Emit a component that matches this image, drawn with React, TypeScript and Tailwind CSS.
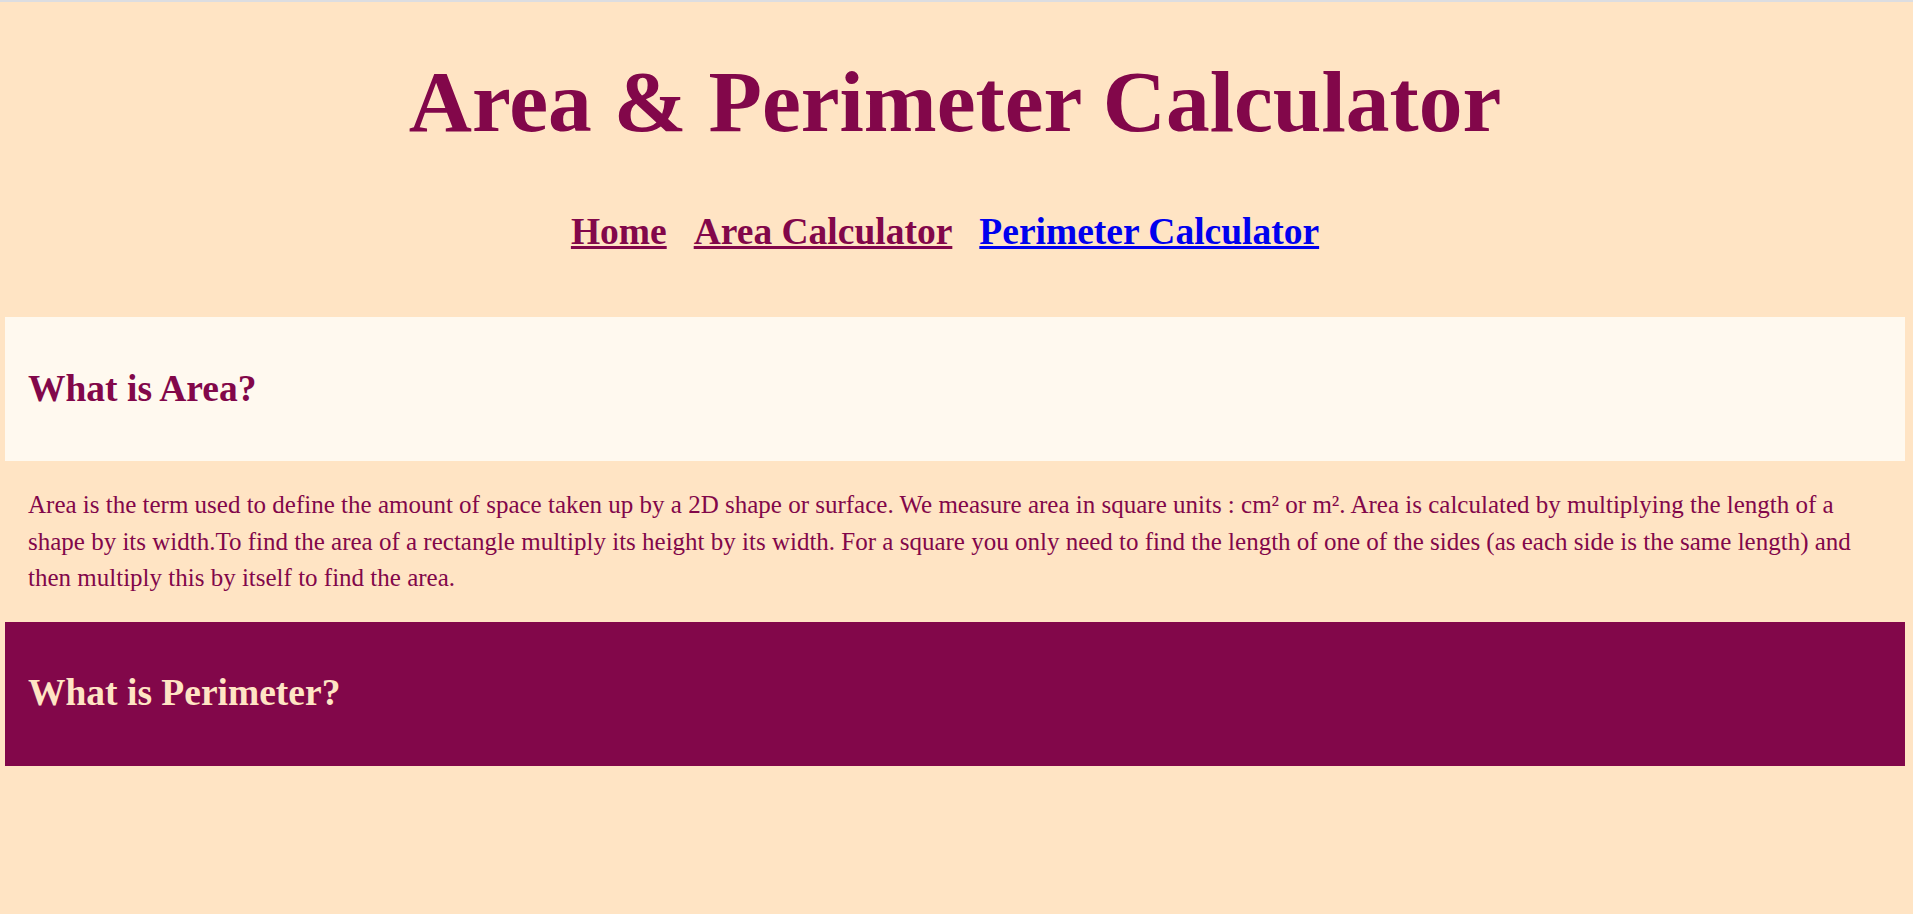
const serif = { fontFamily: '"Liberation Serif", "Times New Roman", serif' }

const links = [
  { label: 'Home', visited: true },
  { label: 'Area Calculator', visited: true },
  { label: 'Perimeter Calculator', visited: false },
]

export default function App() {
  return (
    <div
      style={serif}
      className="min-h-screen bg-[#ffe4c4] border-t-2 border-[#dcdde1] pl-[5px] pr-[8px]"
    >
      <h1 className="mt-[56px] text-center text-[87.5px] leading-none font-bold text-[#82074a]">
        Area &amp; Perimeter Calculator
      </h1>

      <nav className="mt-[67px] flex justify-center gap-[27px] pr-[20px]">
        {links.map((link) => (
          <a
            key={link.label}
            href="#"
            className={
              link.visited
                ? 'text-[37.5px] leading-none font-bold underline text-[#82074a]'
                : 'text-[37.5px] leading-none font-bold underline text-[#0000ee]'
            }
          >
            {link.label}
          </a>
        ))}
      </nav>

      <section className="mt-[67px]">
        <div className="h-[144px] flex items-center bg-[#fff9ef] pl-[23px]">
          <h2 className="text-[37.5px] font-bold text-[#82074a]">What is Area?</h2>
        </div>
        <p className="px-[23px] pt-[26px] pb-[25px] text-[25px] leading-[36.5px] text-[#82074a]">
          Area is the term used to define the amount of space taken up by a 2D shape or surface. We
          measure area in square units : cm² or m². Area is calculated by multiplying the length of a
          shape by its width.To find the area of a rectangle multiply its height by its width. For a
          square you only need to find the length of one of the sides (as each side is the same
          length) and then multiply this by itself to find the area.
        </p>
        <div className="h-[144px] flex items-center bg-[#82074a] pl-[23px]">
          <h2 className="text-[37.5px] font-bold text-[#ffe4c4]">What is Perimeter?</h2>
        </div>
      </section>
    </div>
  )
}
